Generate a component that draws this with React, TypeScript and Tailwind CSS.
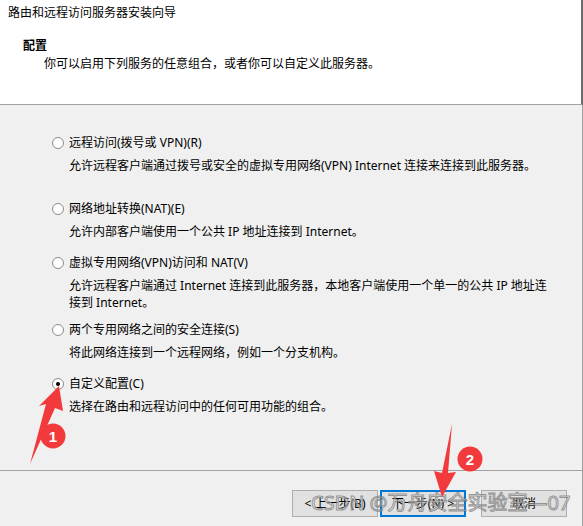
import React from "react";

type Option = {
    label: string
    desc: React.ReactNode
    top: string
    checked?: boolean
}

const options: Option[] = [
    { label: '远程访问(拨号或 VPN)(R)', desc: '允许远程客户端通过拨号或安全的虚拟专用网络(VPN) Internet 连接来连接到此服务器。', top: 'mt-[29px]' },
    { label: '网络地址转换(NAT)(E)', desc: '允许内部客户端使用一个公共 IP 地址连接到 Internet。', top: 'mt-[26px]' },
    {
        label: '虚拟专用网络(VPN)访问和 NAT(V)',
        desc: <>允许远程客户端通过 Internet 连接到此服务器，本地客户端使用一个单一的公共 IP 地址连<br />接到 Internet。</>,
        top: 'mt-[14px]',
    },
    { label: '两个专用网络之间的安全连接(S)', desc: '将此网络连接到一个远程网络，例如一个分支机构。', top: 'mt-[10px]' },
    { label: '自定义配置(C)', desc: '选择在路由和远程访问中的任何可用功能的组合。', top: 'mt-[14px]', checked: true },
]

const Radio = ({ checked }: { checked?: boolean }) => (
    <span className="w-3 h-3 rounded-full border border-[#8a8a8a] bg-white flex items-center justify-center shrink-0">
        {checked && <span className="w-1 h-1 rounded-full bg-black" />}
    </span>
)

const App: React.FC = () => {
    return (
        <div className="relative w-[583px] h-[526px] flex flex-col text-[12px] text-black font-['Noto_Sans','Noto_Sans_CJK_SC',sans-serif] bg-[#f0f0f0] overflow-hidden">
            <div className="h-[105px] bg-white border-b border-[#a0a0a0] border-r-2 border-r-[#6d6d6d] shrink-0">
                <div className="pl-2 pt-[4px] leading-[17px]">路由和远程访问服务器安装向导</div>
                <div className="pl-[23px] mt-[16px] leading-[17px] font-bold">配置</div>
                <div className="pl-[44px] mt-[1px] leading-[17px]">你可以启用下列服务的任意组合，或者你可以自定义此服务器。</div>
            </div>

            <div className="flex-1 flex flex-col border-b border-[#a0a0a0] border-r border-r-[#a0a0a0]">
                {options.map((o, i) => (
                    <div key={i} className={o.top}>
                        <div className="flex items-center pl-[52px] h-[17px]">
                            <Radio checked={o.checked} />
                            <span className="ml-[5px] leading-[17px]">{o.label}</span>
                        </div>
                        <div className="pl-[69px] mt-[6px] leading-[17px]">{o.desc}</div>
                    </div>
                ))}
            </div>

            <div className="h-[55px] shrink-0 flex items-start justify-end pt-[19px] pr-[15px] border-r border-r-[#a0a0a0]">
                <button className="w-[86px] h-[27px] bg-[#e1e1e1] border border-[#adadad]">&lt; 上一步(B)</button>
                <button className="w-[86px] h-[27px] ml-[2px] bg-[#e1e1e1] border-2 border-[#0078d7]">下一步(N) &gt;</button>
                <button className="w-[86px] h-[27px] ml-[15px] bg-[#e1e1e1] border border-[#adadad]">取消</button>
            </div>

            {/* watermark */}
            <div className="absolute left-[311px] top-[488px] text-[20px] leading-[30px] whitespace-nowrap text-[rgba(245,245,245,0.55)] [-webkit-text-stroke:1px_rgba(110,110,110,0.7)]">
                CSDN @万舟安全实验室—07
            </div>

            <svg className="absolute inset-0 pointer-events-none" width="583" height="526" viewBox="0 0 583 526">
                <polygon points="59,386 63,411 55,408 30,464 46,404 39,406" fill="#f23a3c" />
                <circle cx="53" cy="436" r="12.5" fill="#f23a3c" />
                <text x="53" y="441.5" fill="#fff" fontSize="15" fontWeight="bold" textAnchor="middle" fontFamily="Liberation Sans, Arial, sans-serif">1</text>

                <polygon points="452,424 448,473 456,472 442,497 434,471 442,473" fill="#f23a3c" />
                <circle cx="470" cy="459" r="12.5" fill="#f23a3c" />
                <text x="470" y="464.5" fill="#fff" fontSize="15" fontWeight="bold" textAnchor="middle" fontFamily="Liberation Sans, Arial, sans-serif">2</text>
            </svg>
        </div>
    )
}

export default App
